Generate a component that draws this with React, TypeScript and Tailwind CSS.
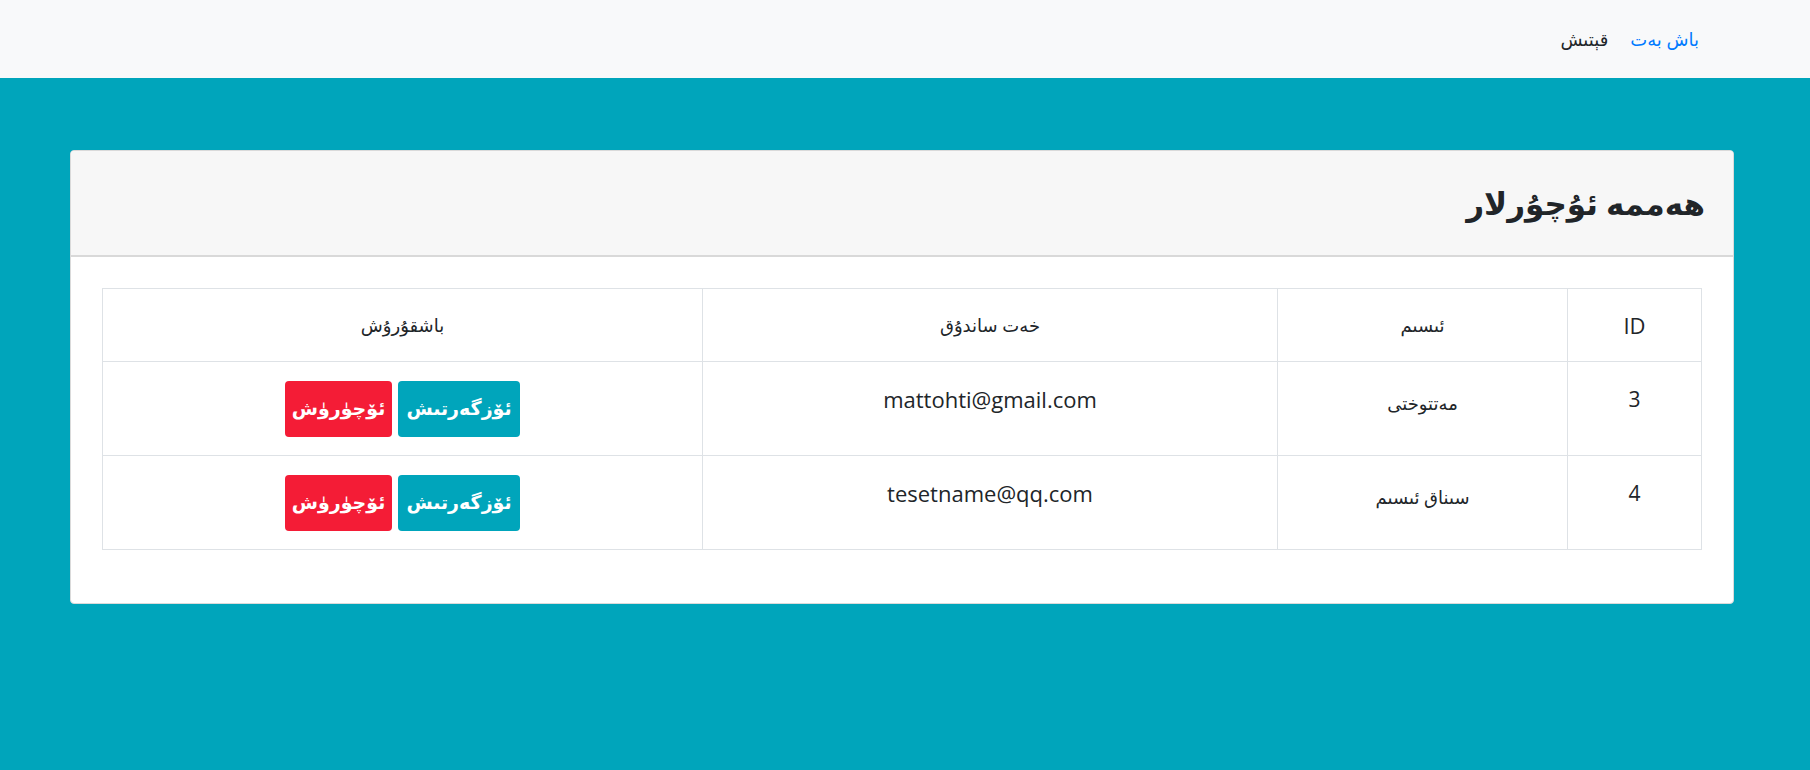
const users = [
  { id: 3, name: "مەتتوختى", email: "mattohti@gmail.com" },
  { id: 4, name: "سىناق ئىسىم", email: "tesetname@qq.com" },
];

const App = () => {
  return (
    <div
      dir="rtl"
      className="min-h-screen bg-[#00a5bb] text-[#212529]"
      style={{ fontFamily: '"Open Sans", "DejaVu Sans", sans-serif' }}
    >
      <nav className="flex h-[78px] items-center gap-[22px] bg-[#f8f9fa] pr-[111px] text-[18px]">
        <a href="#" className="text-[#007bff]">
          باش بەت
        </a>
        <a href="#" className="text-[#212529]">
          قېتىش
        </a>
      </nav>

      <div className="pt-[72px] pl-[70px] pr-[76px]">
        <div className="overflow-hidden rounded border border-[#dadada] bg-white">
          <div className="flex h-[106px] items-center border-b-2 border-[#d9d9d9] bg-[#f7f7f7] px-[28px]">
            <h1 className="text-[31px] font-bold">هەممە ئۇچۇرلار</h1>
          </div>

          <div className="px-[31px] pt-[31px] pb-[53px]">
            <table className="w-full border-collapse text-center">
              <thead>
                <tr className="h-[73px] text-[18px]">
                  <th className="w-[134px] border border-[#dee2e6] text-[22px] font-normal">
                    ID
                  </th>
                  <th className="w-[290px] border border-[#dee2e6] font-normal">
                    ئىسىم
                  </th>
                  <th className="w-[575px] border border-[#dee2e6] font-normal">
                    خەت ساندۇق
                  </th>
                  <th className="border border-[#dee2e6] font-normal">
                    باشقۇرۇش
                  </th>
                </tr>
              </thead>
              <tbody>
                {users.map((u) => (
                  <tr key={u.id} className="h-[94px]">
                    <td className="border border-[#dee2e6] pt-[22px] align-top text-[21px]">
                      {u.id}
                    </td>
                    <td className="border border-[#dee2e6] pt-[28px] align-top text-[18px]">
                      {u.name}
                    </td>
                    <td className="border border-[#dee2e6] pt-[21px] align-top text-[22px]">
                      {u.email}
                    </td>
                    <td className="border border-[#dee2e6] align-middle">
                      <div className="flex justify-center gap-[6px]">
                        <button className="h-[56px] w-[122px] rounded bg-[#00a5bb] text-[19px] font-bold text-white">
                          ئۆزگەرتىش
                        </button>
                        <button className="h-[56px] w-[107px] rounded bg-[#f41c36] text-[19px] font-bold text-white">
                          ئۆچۈرۈش
                        </button>
                      </div>
                    </td>
                  </tr>
                ))}
              </tbody>
            </table>
          </div>
        </div>
      </div>
    </div>
  );
};

export default App;
